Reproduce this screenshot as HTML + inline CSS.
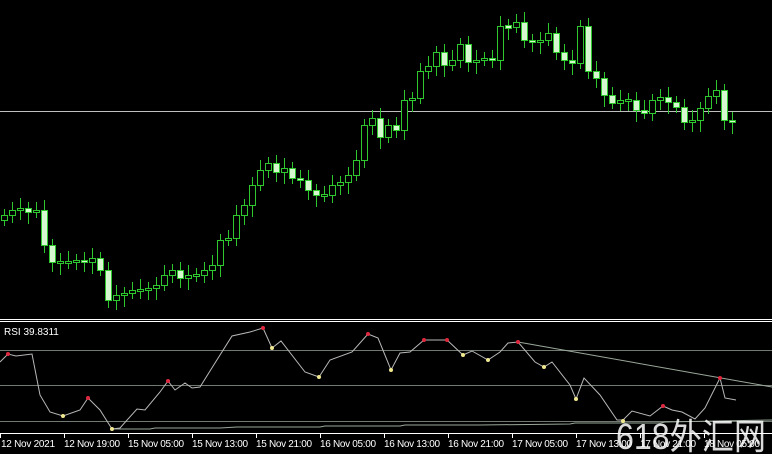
<!DOCTYPE html>
<html><head><meta charset="utf-8"><style>
html,body{margin:0;padding:0;background:#000;width:772px;height:454px;overflow:hidden}
svg{display:block}
text{font-family:"Liberation Sans",sans-serif}
</style></head><body>
<svg id="s" width="772" height="454" xmlns="http://www.w3.org/2000/svg">
<rect width="772" height="454" fill="#000"/>
<line x1="0" y1="111.5" x2="772" y2="111.5" stroke="#bfbfbf" stroke-width="1"/>
<g id="c"></g>
<line x1="0" y1="319.5" x2="772" y2="319.5" stroke="#fff"/>
<line x1="0" y1="321.5" x2="772" y2="321.5" stroke="#fff"/>
<line x1="0" y1="350.5" x2="772" y2="350.5" stroke="#707a70"/>
<line x1="0" y1="385.5" x2="772" y2="385.5" stroke="#707a70"/>
<line x1="0" y1="421.5" x2="772" y2="421.5" stroke="#707a70"/>
<polyline points="112,429 150,429 155,428 220,428 237,427 320,427 325,426 400,426 405,425 480,425 570,424 575,423 660,423 665,422 772,420" fill="none" stroke="#9aa89a"/>
<line x1="518" y1="342" x2="772" y2="387" stroke="#9aa89a"/>
<text x="4" y="335" fill="#fff" font-size="10">RSI 39.8311</text>
<polyline fill="none" stroke="#b8b8b8" stroke-width="1" points="0,362 8,354 16,356 32,354 40,395 50,412 63,416 80,410 88,398 100,410 112,429 120,428 137,409 145,410 160,392 168,381 175,390 185,383 192,388 200,387 215,363 232,336 250,332 263,328 272,348 281,341 305,372 319,377 330,360 352,352 368,334 378,338 391,370 400,353 410,352 424,340 447,340 463,355 472,351 488,360 500,352 508,343 518,342 535,362 544,367 552,362 570,385 576,399 584,378 600,395 617,420 623,420 632,411 650,416 663,406 672,410 682,412 695,419 705,408 720,378 725,398 736,400"/>
<g fill="#e0283c">
<circle cx="8" cy="354" r="2"/><circle cx="88" cy="398" r="2"/><circle cx="168" cy="381" r="2"/><circle cx="263" cy="328" r="2"/><circle cx="368" cy="334" r="2"/><circle cx="424" cy="340" r="2"/><circle cx="447" cy="340" r="2"/><circle cx="518" cy="342" r="2"/><circle cx="663" cy="406" r="2"/><circle cx="720" cy="378" r="2"/></g>
<g fill="#f0e890">
<circle cx="63" cy="416" r="2"/><circle cx="112" cy="429" r="2"/><circle cx="272" cy="348" r="2"/><circle cx="319" cy="377" r="2"/><circle cx="391" cy="370" r="2"/><circle cx="463" cy="355" r="2"/><circle cx="488" cy="360" r="2"/><circle cx="544" cy="367" r="2"/><circle cx="576" cy="399" r="2"/><circle cx="623" cy="421" r="2"/></g>
<line x1="0" y1="433.5" x2="772" y2="433.5" stroke="#fff"/>
<g stroke="#fff">
<line x1="0.5" y1="434" x2="0.5" y2="438"/><line x1="64.5" y1="434" x2="64.5" y2="438"/><line x1="128.5" y1="434" x2="128.5" y2="438"/><line x1="192.5" y1="434" x2="192.5" y2="438"/><line x1="256.5" y1="434" x2="256.5" y2="438"/><line x1="320.5" y1="434" x2="320.5" y2="438"/><line x1="384.5" y1="434" x2="384.5" y2="438"/><line x1="448.5" y1="434" x2="448.5" y2="438"/><line x1="512.5" y1="434" x2="512.5" y2="438"/><line x1="576.5" y1="434" x2="576.5" y2="438"/><line x1="640.5" y1="434" x2="640.5" y2="438"/><line x1="704.5" y1="434" x2="704.5" y2="438"/></g>
<g fill="#fff" font-size="10">
<text x="1" y="447" textLength="54">12 Nov 2021</text><text x="64" y="447" textLength="56">12 Nov 19:00</text><text x="128" y="447" textLength="56">15 Nov 05:00</text><text x="192" y="447" textLength="56">15 Nov 13:00</text><text x="256" y="447" textLength="56">15 Nov 21:00</text><text x="320" y="447" textLength="56">16 Nov 05:00</text><text x="384" y="447" textLength="56">16 Nov 13:00</text><text x="448" y="447" textLength="56">16 Nov 21:00</text><text x="512" y="447" textLength="56">17 Nov 05:00</text><text x="576" y="447" textLength="56">17 Nov 13:00</text><text x="640" y="447" textLength="56">17 Nov 21:00</text><text x="704" y="447" textLength="56">18 Nov 05:00</text></g>
<text x="616" y="449" fill="#fff" fill-opacity="0.85" font-size="36" font-family="Liberation Sans,'Noto Sans CJK SC',sans-serif" textLength="150" lengthAdjust="spacingAndGlyphs">618<tspan font-family="'Noto Sans CJK SC',sans-serif">外汇网</tspan></text>
</svg>
<script>
var cl=[215,210,208,212,210,245,262,262,262,260,262,258,270,300,295,293,290,290,288,285,275,270,278,275,275,270,265,240,238,215,205,185,170,163,172,168,178,180,190,195,195,185,182,175,160,125,118,137,125,130,100,98,71,66,52,65,60,44,62,60,58,60,26,27,22,40,42,40,33,52,60,63,26,71,78,95,103,100,100,110,113,100,97,102,107,122,120,108,96,90,120,122];
var g=document.getElementById('c'),h='',prev=220;
for(var i=0;i<cl.length;i++){var x=4+8*i,o=prev,c=cl[i];var t=Math.min(o,c),b=Math.max(o,c);if(b-t<2){t-=1;b+=1;}
var f=c>o;h+='<line x1="'+(x+.5)+'" y1="'+(t-6-(i%3)*2)+'" x2="'+(x+.5)+'" y2="'+(b+6+(i%4)*2)+'" stroke="#2ec82e"/>';
h+='<rect x="'+(x-2.5)+'" y="'+(t+.5)+'" width="6" height="'+(b-t)+'" fill="'+(f?'#d6f7cf':'#000')+'" stroke="#2ec82e"/>';prev=c;}
g.innerHTML=h;
</script>
</body></html>
